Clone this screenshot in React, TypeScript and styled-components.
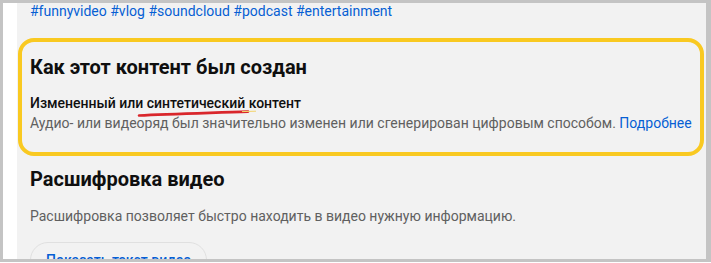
import React from 'react';
import styled, { createGlobalStyle } from 'styled-components';

const GlobalStyle = createGlobalStyle`
  * { box-sizing: border-box; }
  html, body { margin: 0; padding: 0; background: #fff; }
  body { font-family: Roboto, "Noto Sans", Arial, sans-serif; }
`;

const Frame = styled.div`
  width: 711px;
  height: 262px;
  border-style: solid;
  border-color: #c4c4c4;
  border-width: 3px 5px 3px 3px;
  display: flex;
  overflow: hidden;
`;

const Gutter = styled.div`
  width: 14px;
  background: #fff;
  flex-shrink: 0;
`;

const Main = styled.main`
  flex: 1;
  background: #f2f2f2;
  padding: 0 4px 0 1px;
  display: flex;
  flex-direction: column;
`;

const Tags = styled.div`
  margin: -2px 0 0 12px;
  font-size: 14px;
  line-height: 20px;
  color: #065fd4;
`;

const Highlight = styled.section`
  margin-top: 17px;
  border: 4px solid #f9c921;
  border-radius: 16px;
  padding: 11px 8px 19px;
`;

const Plain = styled.section`
  margin-top: 9px;
  padding: 0 12px;
`;

const Heading = styled.h2`
  margin: 0;
  font-size: 20px;
  line-height: 28px;
  font-weight: 700;
  color: #0f0f0f;
`;

const Label = styled.div`
  margin-top: 12px;
  font-size: 14px;
  line-height: 20px;
  font-weight: 500;
  color: #0f0f0f;
`;

const Text = styled.p<{ $gap?: number }>`
  margin: ${(p) => p.$gap ?? 0}px 0 0;
  font-size: 14px;
  line-height: 20px;
  color: #606060;
  white-space: nowrap;
`;

const Link = styled.a`
  color: #065fd4;
  text-decoration: none;
`;

const Marked = styled.span`
  position: relative;
`;

const Scribble = styled.svg`
  position: absolute;
  left: -9px;
  top: 15px;
  width: 120px;
  height: 8px;
  overflow: visible;
  pointer-events: none;
`;

const OutlineButton = styled.button`
  margin-top: 16px;
  height: 36px;
  padding: 0 15px;
  border: 1px solid #e0e0e0;
  border-radius: 18px;
  background: transparent;
  font-family: inherit;
  font-size: 14px;
  font-weight: 500;
  color: #065fd4;
  align-self: flex-start;
`;

export default function App() {
  return (
    <>
      <GlobalStyle />
      <Frame>
        <Gutter />
        <Main>
          <Tags>#funnyvideo #vlog #soundcloud #podcast #entertainment</Tags>
          <Highlight>
            <Heading>Как этот контент был создан</Heading>
            <Label>
              Измененный или{' '}
              <Marked>
                синтетический
                <Scribble viewBox="0 0 120 8">
                  <path
                    d="M1 5.5 C 30 4, 70 3, 110 1.6"
                    stroke="#d9262b"
                    strokeWidth="2.6"
                    fill="none"
                    strokeLinecap="round"
                  />
                  <path
                    d="M104 1.6 L 118 1.2"
                    stroke="#f3d36a"
                    strokeWidth="1"
                    fill="none"
                  />
                </Scribble>
              </Marked>{' '}
              контент
            </Label>
            <Text>
              Аудио- или видеоряд был значительно изменен или сгенерирован цифровым способом.{' '}
              <Link href="#">Подробнее</Link>
            </Text>
          </Highlight>
          <Plain>
            <Heading>Расшифровка видео</Heading>
            <Text $gap={13}>
              Расшифровка позволяет быстро находить в видео нужную информацию.
            </Text>
            <OutlineButton>Показать текст видео</OutlineButton>
          </Plain>
        </Main>
      </Frame>
    </>
  );
}
